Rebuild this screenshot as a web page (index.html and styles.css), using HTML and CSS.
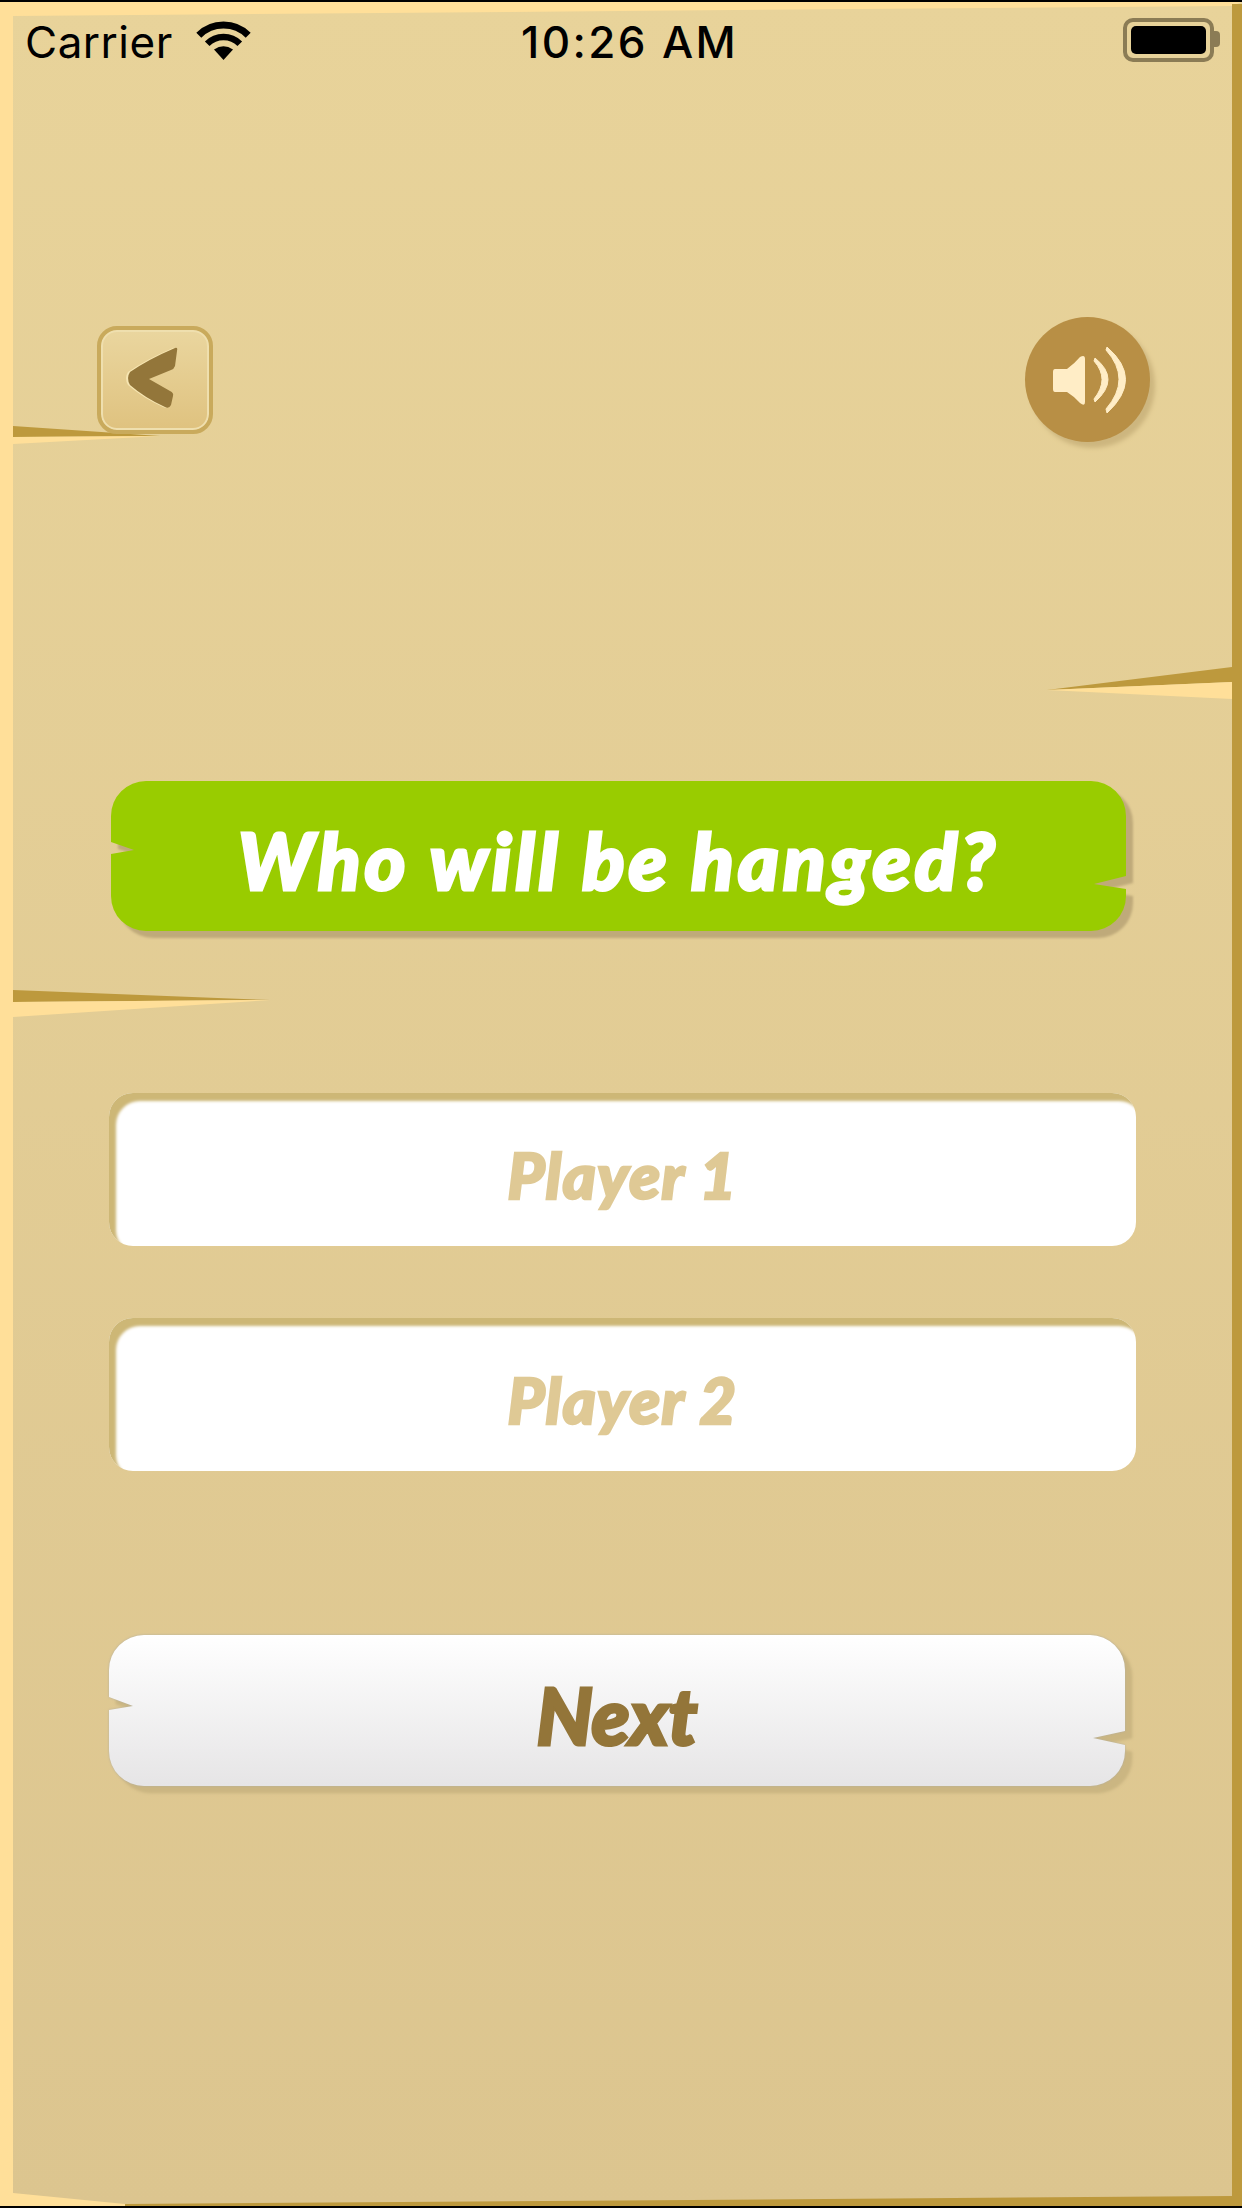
FILE: index.html
```html
<!DOCTYPE html>
<html lang="en">
  <head>
    <meta charset="UTF-8" />
    <title>Who will be hanged?</title>
    <link rel="stylesheet" href="styles.css">
  </head>
  <body>
    <!-- torn paper edges behind everything -->
    <svg class="paper-edges" viewBox="0 0 1242 2208" aria-hidden="true">
      <rect x="0" y="0" width="13" height="2208" fill="#ffdf99" />
      <polygon points="0,2 1242,2 1232,6 13,16 0,16" fill="#ffdf99" />
      <rect x="1232" y="4" width="10" height="2204" fill="#bd993d" />
      <polygon points="125,2204 1232,2196 1242,2196 1242,2206 125,2206" fill="#bd993d" />
      <polygon points="13,2193 125,2204 125,2206 13,2206" fill="#ffdf99" />
      <polygon points="13,426 13,437 160,436" fill="#bd993d" />
      <polygon points="13,437 13,444 160,436" fill="#ffdf99" />
      <polygon points="13,990 13,1002 270,1000" fill="#bd993d" />
      <polygon points="13,1002 13,1017 270,1000" fill="#ffdf99" />
      <polygon points="1232,667 1232,682 1047,690" fill="#bd993d" />
      <polygon points="1232,682 1232,699 1047,690" fill="#ffdf99" />
      <rect x="0" y="0" width="1242" height="2" fill="#000" />
      <rect x="0" y="2206" width="1242" height="2" fill="#000" />
    </svg>

    <div class="screen">
      <div class="status-bar">
        <div class="status-left">
          <span class="carrier">Carrier</span>
          <svg class="wifi" viewBox="0 0 55 39">
            <path d="M2.8 14.3 A35 35 0 0 1 52.2 14.3" fill="none" stroke="#000" stroke-width="7" />
            <path d="M11.2 22.7 A23 23 0 0 1 43.8 22.7" fill="none" stroke="#000" stroke-width="6.5" />
            <path d="M27.5 39 L18 28.5 Q27.5 22 37 28.5 Z" fill="#000" />
          </svg>
        </div>
        <span class="clock">10:26 AM</span>
        <div class="battery">
          <div class="battery-level"></div>
        </div>
      </div>

      <div class="top-actions">
        <div class="back-button">
          <svg class="back-icon" viewBox="4 4 108 100">
            <path d="M76 22 Q79 21 78 25 L76 40 Q75 43 72 44 L50 53 L71 65 Q75 67 74 70 L72 79 Q70 83 66 81 Q46 72 31 59 Q27 52 31 46 Q50 33 76 22Z" fill="#f7e6b2" />
            <path d="M78 22 Q81 21 80 25 L78 40 Q77 43 74 44 L52 53 L73 65 Q77 67 76 70 L74 79 Q72 83 68 81 Q48 72 33 59 Q29 52 33 46 Q52 33 78 22Z" fill="#93763a" />
          </svg>
        </div>
        <div class="sound-button">
          <svg class="sound-icon" viewBox="0 0 125 125">
            <path d="M30 52 H42 Q50 46 55 40 Q60 37 60 42 V85 Q60 90 55 86 Q50 80 42 75 H30 Q28 75 28 72 V55 Q28 52 30 52Z" fill="#ffedc6" />
            <path d="M70 41 Q96 62 70 85 L69 82 Q85 62 69 44Z" fill="#ffedc6" stroke="#ffedc6" />
            <path d="M82 30 Q119 62 82 96 L81 92 Q107 62 81 33Z" fill="#ffedc6" stroke="#ffedc6" />
          </svg>
        </div>
      </div>

      <div class="banner-wrap">
        <div class="banner">Who will be hanged?</div>
      </div>

      <div class="player-field">Player 1</div>
      <div class="player-field second">Player 2</div>

      <div class="next-wrap">
        <div class="next-button">Next</div>
      </div>
    </div>
  </body>
</html>
```

FILE: styles.css
```css
body {
  margin: 0;
  width: 1242px;
  height: 2208px;
  overflow: hidden;
  position: relative;
  background: linear-gradient(#e8d39a, #dcc58f);
  font-family: Lato, sans-serif;
}

.paper-edges {
  position: absolute;
  left: 0;
  top: 0;
  width: 1242px;
  height: 2208px;
}

.screen {
  position: relative;
  display: flex;
  flex-direction: column;
}

/* status bar */
.status-bar {
  height: 80px;
  padding: 18px 28px 0 25px;
  box-sizing: border-box;
  display: flex;
  align-items: flex-start;
  font-family: Inter, sans-serif;
  color: #000;
}

.status-left {
  width: 496px;
  display: flex;
  align-items: flex-start;
  gap: 23px;
}

.carrier {
  font-size: 44px;
  line-height: 48px;
  letter-spacing: 0.5px;
}

.wifi {
  width: 55px;
  height: 39px;
  margin-top: 3px;
}

.clock {
  font-size: 44px;
  line-height: 48px;
  font-weight: 500;
  letter-spacing: 2.4px;
  white-space: nowrap;
}

.battery {
  width: 91px;
  height: 44px;
  margin-left: auto;
  box-sizing: border-box;
  border: 4px solid #8b7c55;
  border-radius: 10px;
  padding: 4px 4px;
  position: relative;
}

.battery::after {
  content: "";
  position: absolute;
  left: 87px;
  top: 9px;
  width: 6px;
  height: 16px;
  border-radius: 0 4px 4px 0;
  background: #8b7c55;
}

.battery-level {
  height: 100%;
  background: #000;
  border-radius: 5px;
}

/* back and sound */
.top-actions {
  margin-top: 237px;
  padding: 0 92px 0 97px;
  display: flex;
  justify-content: space-between;
  align-items: center;
}

.back-button {
  width: 116px;
  height: 108px;
  box-sizing: border-box;
  border: 4px solid #c9aa5c;
  border-radius: 20px;
  background: linear-gradient(#ead69f, #dfc27f);
  box-shadow: inset 0 0 0 2px #efdfae;
  display: flex;
}

.back-icon {
  width: 108px;
  height: 100px;
}

.sound-button {
  width: 125px;
  height: 125px;
  border-radius: 50%;
  background: #b88f45;
  box-shadow: 5px 6px 4px #cdb67f;
  display: flex;
}

.sound-icon {
  width: 125px;
  height: 125px;
}

/* notched buttons */
.banner-wrap {
  margin: 339px 0 0 111px;
  width: 1015px;
  filter: drop-shadow(7px 7px 1px #bfaa7a);
}

.banner {
  height: 150px;
  padding-top: 8px;
  box-sizing: border-box;
  background: #99cc00;
  color: #fff;
  letter-spacing: 4px;
  clip-path: path("M35 0 H980 A35 35 0 0 1 1015 35 V95 L983 103 L1015 108 V115 A35 35 0 0 1 980 150 H35 A35 35 0 0 1 0 115 V73 L23 69 L0 61 V35 A35 35 0 0 1 35 0Z");
}

.banner,
.next-button {
  display: flex;
  align-items: center;
  justify-content: center;
  font-size: 78px;
  font-weight: 900;
  font-style: italic;
  -webkit-text-stroke: 3px currentColor;
  paint-order: stroke fill;
}

.player-field {
  margin: 162px 0 0 109px;
  width: 1027px;
  height: 153px;
  box-sizing: border-box;
  padding-top: 9px;
  border-radius: 24px;
  background: #fff;
  box-shadow: inset 7px 8px 3px #cdb776;
  display: flex;
  align-items: center;
  justify-content: center;
  color: #dfc995;
  font-size: 63px;
  font-weight: 900;
  font-style: italic;
  letter-spacing: 1.5px;
  -webkit-text-stroke: 2.5px currentColor;
  paint-order: stroke fill;
}

.player-field.second {
  margin-top: 72px;
}

.next-wrap {
  margin: 164px 0 0 109px;
  width: 1016px;
  filter: drop-shadow(0 0 1px #b5b0a0) drop-shadow(7px 7px 1px #cbb682);
}

.next-button {
  height: 151px;
  padding-top: 8px;
  box-sizing: border-box;
  background: linear-gradient(#ffffff, #e6e5e6);
  color: #937539;
  clip-path: path("M35 0 H981 A35 35 0 0 1 1016 35 V96 L984 103 L1016 110 V116 A35 35 0 0 1 981 151 H35 A35 35 0 0 1 0 116 V75 L24 71 L0 62 V35 A35 35 0 0 1 35 0Z");
}
```
